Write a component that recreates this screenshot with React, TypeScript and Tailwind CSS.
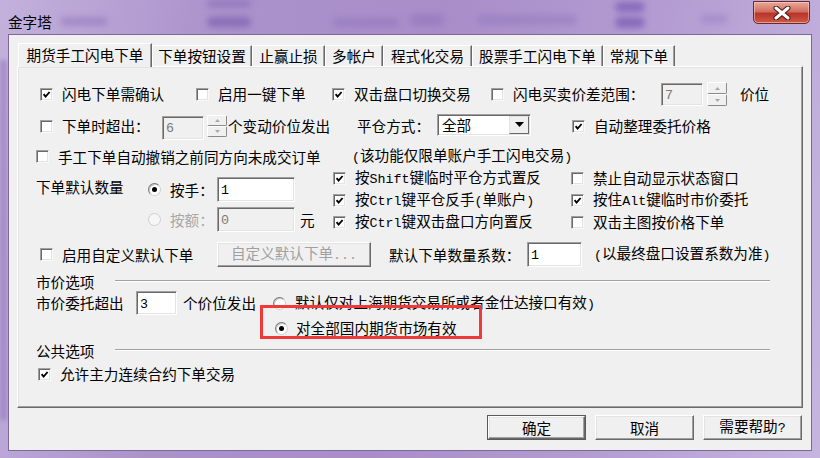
import React from "react";

const ASCII_SPLIT = /([\x20-\x7e]+)/;

function T({ s, className = "" }: { s: string; className?: string }) {
  const parts = s.split(ASCII_SPLIT).filter((p) => p !== "");
  return (
    <span className={"whitespace-nowrap leading-[18px] " + className}>
      {parts.map((p, i) =>
        /^[\x20-\x7e]+$/.test(p) ? (
          <span key={i} className="font-['Liberation_Mono',monospace] text-[13.3px]">
            {p}
          </span>
        ) : (
          <React.Fragment key={i}>{p}</React.Fragment>
        )
      )}
    </span>
  );
}

function Box({ checked = false }: { checked?: boolean }) {
  return (
    <span className="flex items-center justify-center w-[13px] h-[13px] shrink-0 bg-white border border-t-[#a0a0a0] border-l-[#a0a0a0] border-r-[#f8f8f8] border-b-[#f8f8f8] shadow-[inset_1px_1px_0_#696969,inset_-1px_-1px_0_#e3e3e3]">
      {checked && (
        <svg width="9" height="9" viewBox="0 0 9 9">
          <path d="M1.6 4.2 L3.6 6.6 L7.6 2" fill="none" stroke="#000" strokeWidth="1.9" />
        </svg>
      )}
    </span>
  );
}

function Check({
  checked = false,
  label,
  className = "",
  gap = "ml-[9px]",
}: {
  checked?: boolean;
  label: string;
  className?: string;
  gap?: string;
}) {
  return (
    <div className={"flex items-center shrink-0 " + className}>
      <Box checked={checked} />
      <T s={label} className={gap} />
    </div>
  );
}

function Radio({ checked = false, disabled = false }: { checked?: boolean; disabled?: boolean }) {
  return (
    <span
      className={
        disabled
          ? "flex items-center justify-center w-[13px] h-[13px] shrink-0 rounded-full border border-[#cfcfcf] bg-[#f6f6f6]"
          : "flex items-center justify-center w-[13px] h-[13px] shrink-0 rounded-full border border-t-[#7a7a7a] border-l-[#7a7a7a] border-r-[#d0d0d0] border-b-[#d0d0d0] bg-white shadow-[inset_1px_1px_0_#c8c8c8]"
      }
    >
      {checked && <span className="w-[5px] h-[5px] rounded-full bg-black" />}
    </span>
  );
}

function Field({
  value,
  className = "",
  disabled = false,
}: {
  value: string;
  className?: string;
  disabled?: boolean;
}) {
  return (
    <div
      className={
        "flex items-center shrink-0 pl-[3px] border border-t-[#a0a0a0] border-l-[#a0a0a0] border-r-white border-b-white shadow-[inset_1px_1px_0_#696969,inset_-1px_-1px_0_#e3e3e3] " +
        (disabled ? "bg-[#f0f0f0] text-[#7a7a7a] " : "bg-white text-black ") +
        className
      }
    >
      <T s={value} />
    </div>
  );
}

function SpinHalf({ up }: { up: boolean }) {
  return (
    <div className="flex-1 flex items-center justify-center bg-[#f0f0f0] border border-t-white border-l-white border-r-[#8a8a8a] border-b-[#8a8a8a] rounded-[2px]">
      <svg width="5" height="3" viewBox="0 0 5 3">
        <path d={up ? "M0 3 L2.5 0 L5 3Z" : "M0 0 L5 0 L2.5 3Z"} fill="#a8a8a8" />
      </svg>
    </div>
  );
}

function Spin({ className = "" }: { className?: string }) {
  return (
    <div className={"flex flex-col shrink-0 w-[20px] " + className}>
      <SpinHalf up />
      <SpinHalf up={false} />
    </div>
  );
}

function Button({
  label,
  className = "",
  disabled = false,
}: {
  label: string;
  className?: string;
  disabled?: boolean;
}) {
  return (
    <div
      className={
        "flex items-center justify-center shrink-0 bg-[#f0f0f0] border border-t-white border-l-white border-r-[#696969] border-b-[#696969] shadow-[inset_-1px_-1px_0_#a0a0a0,inset_1px_1px_0_#e3e3e3] " +
        (disabled ? "text-[#a0a0a0] " : "text-black ") +
        className
      }
    >
      <T s={label} />
    </div>
  );
}

function Etched({ className = "" }: { className?: string }) {
  return <div className={"h-[2px] border-t border-t-[#a0a0a0] border-b border-b-white shrink-0 " + className} />;
}

const tabs: [string, number][] = [
  ["期货手工闪电下单", 134],
  ["下单按钮设置", 100],
  ["止赢止损", 73],
  ["多帐户", 58],
  ["程式化交易", 89],
  ["股票手工闪电下单", 131],
  ["常规下单", 72],
];

export default function App() {
  return (
    <div className="relative w-[820px] h-[458px] overflow-hidden font-['Noto_Sans_CJK_SC','Liberation_Sans',sans-serif] text-[14.6px] text-black bg-[linear-gradient(100deg,#c3b1dc_0%,#ab92cb_25%,#a98dc9_50%,#b49dd2_75%,#c6b5df_100%)]">
      {/* blurred background content behind the aero glass */}
      <div className="absolute left-[60px] top-[17px] w-[48px] h-[9px] rounded-full bg-[#8c70b8] opacity-50 blur-[3px]" />
      <div className="absolute left-[207px] top-[0px] w-[44px] h-[7px] rounded-full bg-[#7d5fb0] opacity-50 blur-[3px]" />
      <div className="absolute left-[207px] top-[17px] w-[44px] h-[10px] rounded-full bg-[#7456ac] opacity-60 blur-[3px]" />
      <div className="absolute left-[333px] top-[18px] w-[66px] h-[9px] rounded-full bg-[#8c70b8] opacity-50 blur-[3px]" />
      <div className="absolute left-[410px] top-[14px] w-[34px] h-[12px] rounded-full bg-[#8c70b8] opacity-50 blur-[3px]" />
      <div className="absolute left-[477px] top-[15px] w-[100px] h-[10px] rounded-full bg-[#8c70b8] opacity-40 blur-[3px]" />
      <div className="absolute left-[615px] top-[2px] w-[30px] h-[10px] rounded-full bg-[#6a4cae] opacity-60 blur-[3px]" />
      <div className="absolute left-[615px] top-[17px] w-[30px] h-[11px] rounded-full bg-[#6a4cae] opacity-60 blur-[3px]" />
      <div className="absolute left-[700px] top-[14px] w-[28px] h-[10px] rounded-full bg-[#9a80c2] opacity-50 blur-[3px]" />
      <div className="absolute left-[0px] top-[60px] w-[7px] h-[360px] bg-[#9478bd] opacity-60 blur-[2px]" />

      {/* title bar */}
      <div className="relative flex h-[34px]">
        <div className="pl-[8px] pt-[11px]">
          <T s="金字塔" />
        </div>
        <div className="ml-auto mr-[10px] mt-[1px] w-[57px] h-[23px] rounded-b-[5px] border border-[#6b2a2a] bg-[linear-gradient(180deg,#e9a999_0%,#d2705f_45%,#b8342a_55%,#cf5a45_100%)] shadow-[inset_0_0_0_1px_rgba(255,220,210,0.5)] flex items-center justify-center">
          <svg width="18" height="14" viewBox="0 0 18 14">
            <path d="M3 2 L15 12 M15 2 L3 12" stroke="#4a1414" strokeWidth="5" strokeLinecap="round" />
            <path d="M3 2 L15 12 M15 2 L3 12" stroke="#ffffff" strokeWidth="3" strokeLinecap="round" />
          </svg>
        </div>
      </div>

      {/* client area */}
      <div className="relative mx-[8px] h-[417px] bg-[#f0f0f0] border border-[#7a6a95] flex flex-col">
        {/* tabs */}
        <div className="flex items-end h-[23px] mt-[8px] ml-[9px]">
          {tabs.map(([label, w], i) =>
            i === 0 ? (
              <div
                key={label}
                className="relative z-10 -mb-[1px] w-[134px] h-[24px] pb-[1px] flex items-center justify-center bg-[#f0f0f0] border-t border-l border-r border-t-white border-l-white border-r-[#696969] shadow-[inset_-1px_0_0_#a0a0a0] shrink-0"
              >
                <T s={label} />
              </div>
            ) : (
              <div
                key={label}
                style={{ width: w }}
                className="h-[21px] flex items-center justify-center bg-[#f0f0f0] border-t border-l border-r border-t-white border-l-white border-r-[#696969] shadow-[inset_-1px_0_0_#a0a0a0] shrink-0"
              >
                <T s={label} />
              </div>
            )
          )}
        </div>

        {/* tab panel */}
        <div className="ml-[8px] w-[786px] h-[342px] shrink-0 bg-[#f0f0f0] border border-t-white border-l-white border-r-[#696969] border-b-[#696969] shadow-[inset_-1px_-1px_0_#a0a0a0,inset_1px_1px_0_#e3e3e3] pt-[15px] flex flex-col">
          {/* row 1 */}
          <div className="flex items-center h-[24px]">
            <Check checked label="闪电下单需确认" className="ml-[22px] w-[156px]" />
            <Check label="启用一键下单" className="w-[136px]" />
            <Check checked label="双击盘口切换交易" className="w-[159px]" />
            <Check label="闪电买卖价差范围：" className="w-[170px]" />
            <Field value="7" disabled className="w-[42px] h-[23px]" />
            <Spin className="ml-[4px] h-[24px]" />
            <T s="价位" className="ml-[13px]" />
          </div>

          {/* row 2 */}
          <div className="flex items-center h-[40px]">
            <Check label="下单时超出：" className="ml-[22px] w-[122px]" />
            <Field value="6" disabled className="w-[42px] h-[24px] mt-[3px]" />
            <Spin className="ml-[3px] h-[22px]" />
            <div className="ml-[1px] w-[129px] shrink-0">
              <T s="个变动价位发出" />
            </div>
            <div className="w-[80px] shrink-0">
              <T s="平仓方式：" />
            </div>
            <div className="flex items-center w-[94px] h-[22px] -mt-[3px] shrink-0 bg-white border border-t-[#a0a0a0] border-l-[#a0a0a0] border-r-white border-b-white shadow-[inset_1px_1px_0_#696969,inset_-1px_-1px_0_#e3e3e3] p-[1px]">
              <div className="flex-1 pl-[3px]">
                <T s="全部" />
              </div>
              <div className="w-[20px] h-full flex items-center justify-center bg-[#f0f0f0] border border-t-[#e3e3e3] border-l-[#e3e3e3] border-r-[#696969] border-b-[#696969]">
                <svg width="9" height="5" viewBox="0 0 9 5">
                  <path d="M0 0 H9 L4.5 5Z" fill="#000" />
                </svg>
              </div>
            </div>
            <Check checked label="自动整理委托价格" className="ml-[41px]" />
          </div>

          {/* row 3 */}
          <div className="flex items-center h-[21px]">
            <Check label="手工下单自动撤销之前同方向未成交订单" className="ml-[18px] w-[316px]" />
            <T s="(该功能仅限单账户手工闪电交易)" />
          </div>

          {/* block rows 4-6 */}
          <div className="flex h-[66px]">
            <div className="flex w-[315px] shrink-0">
              <div className="ml-[18px] w-[112px] mt-[9px] shrink-0">
                <T s="下单默认数量" />
              </div>
              <div className="flex flex-col pt-[10px] gap-[5px]">
                <div className="flex items-center h-[25px]">
                  <div className="flex items-center w-[69px] shrink-0">
                    <Radio checked />
                    <T s="按手：" className="ml-[9px]" />
                  </div>
                  <Field value="1" className="w-[78px] h-[25px]" />
                </div>
                <div className="flex items-center h-[25px]">
                  <div className="flex items-center w-[69px] shrink-0">
                    <Radio disabled />
                    <T s="按额：" className="ml-[9px] text-[#a8a8a8]" />
                  </div>
                  <Field value="0" disabled className="w-[78px] h-[25px]" />
                  <T s="元" className="ml-[5px]" />
                </div>
              </div>
            </div>
            <div className="flex flex-col">
              <div className="flex items-center h-[22px]">
                <Check checked label="按Shift键临时平仓方式置反" className="w-[238px]" />
                <Check label="禁止自动显示状态窗口" />
              </div>
              <div className="flex items-center h-[22px]">
                <Check checked label="按Ctrl键平仓反手(单账户)" className="w-[238px]" />
                <Check checked label="按住Alt键临时市价委托" />
              </div>
              <div className="flex items-center h-[22px]">
                <Check checked label="按Ctrl键双击盘口方向置反" className="w-[238px]" />
                <Check label="双击主图按价格下单" />
              </div>
            </div>
          </div>

          {/* row 7 */}
          <div className="flex items-center h-[43px]">
            <Check label="启用自定义默认下单" className="ml-[22px] w-[177px]" />
            <Button label="自定义默认下单..." disabled className="w-[154px] h-[25px]" />
            <div className="ml-[18px] w-[138px] shrink-0">
              <T s="默认下单数量系数：" />
            </div>
            <Field value="1" className="w-[55px] h-[25px]" />
            <T s="(以最终盘口设置系数为准)" className="ml-[12px]" />
          </div>

          {/* row 8 */}
          <div className="flex items-center h-[12px]">
            <div className="ml-[18px] w-[79px] shrink-0">
              <T s="市价选项" />
            </div>
            <Etched className="w-[655px] -mt-[2px]" />
          </div>

          {/* row 9 */}
          <div className="flex items-center h-[30px]">
            <div className="ml-[18px] w-[100px] shrink-0">
              <T s="市价委托超出" />
            </div>
            <Field value="3" className="w-[41px] h-[24px]" />
            <div className="ml-[6px] w-[90px] shrink-0">
              <T s="个价位发出" />
            </div>
            <div className="flex items-center">
              <Radio />
              <T s="默认仅对上海期货交易所或者金仕达接口有效)" className="ml-[9px]" />
            </div>
          </div>

          {/* row 10 */}
          <div className="flex items-center h-[20px]">
            <div className="flex items-center ml-[257px]">
              <Radio checked />
              <T s="对全部国内期货市场有效" className="ml-[8px]" />
            </div>
          </div>

          {/* row 11 */}
          <div className="flex items-center h-[26px]">
            <div className="ml-[18px] w-[79px] shrink-0">
              <T s="公共选项" />
            </div>
            <Etched className="w-[655px] -mt-[2px]" />
          </div>

          {/* row 12 */}
          <div className="flex items-center h-[20px]">
            <Check checked label="允许主力连续合约下单交易" className="ml-[20px]" />
          </div>
        </div>

        {/* bottom buttons */}
        <div className="flex justify-end gap-[9px] pr-[9px] mt-[7px]">
          <div className="border border-[#5a5a5a]">
            <Button label="确定" className="w-[97px] h-[23px]" />
          </div>
          <Button label="取消" className="w-[99px] h-[25px]" />
          <Button label="需要帮助?" className="w-[99px] h-[25px]" />
        </div>
      </div>

      {/* red highlight annotation */}
      <div className="absolute left-[260px] top-[305px] w-[222px] h-[34px] border-[3px] border-[#f03a3a]" />
    </div>
  );
}
